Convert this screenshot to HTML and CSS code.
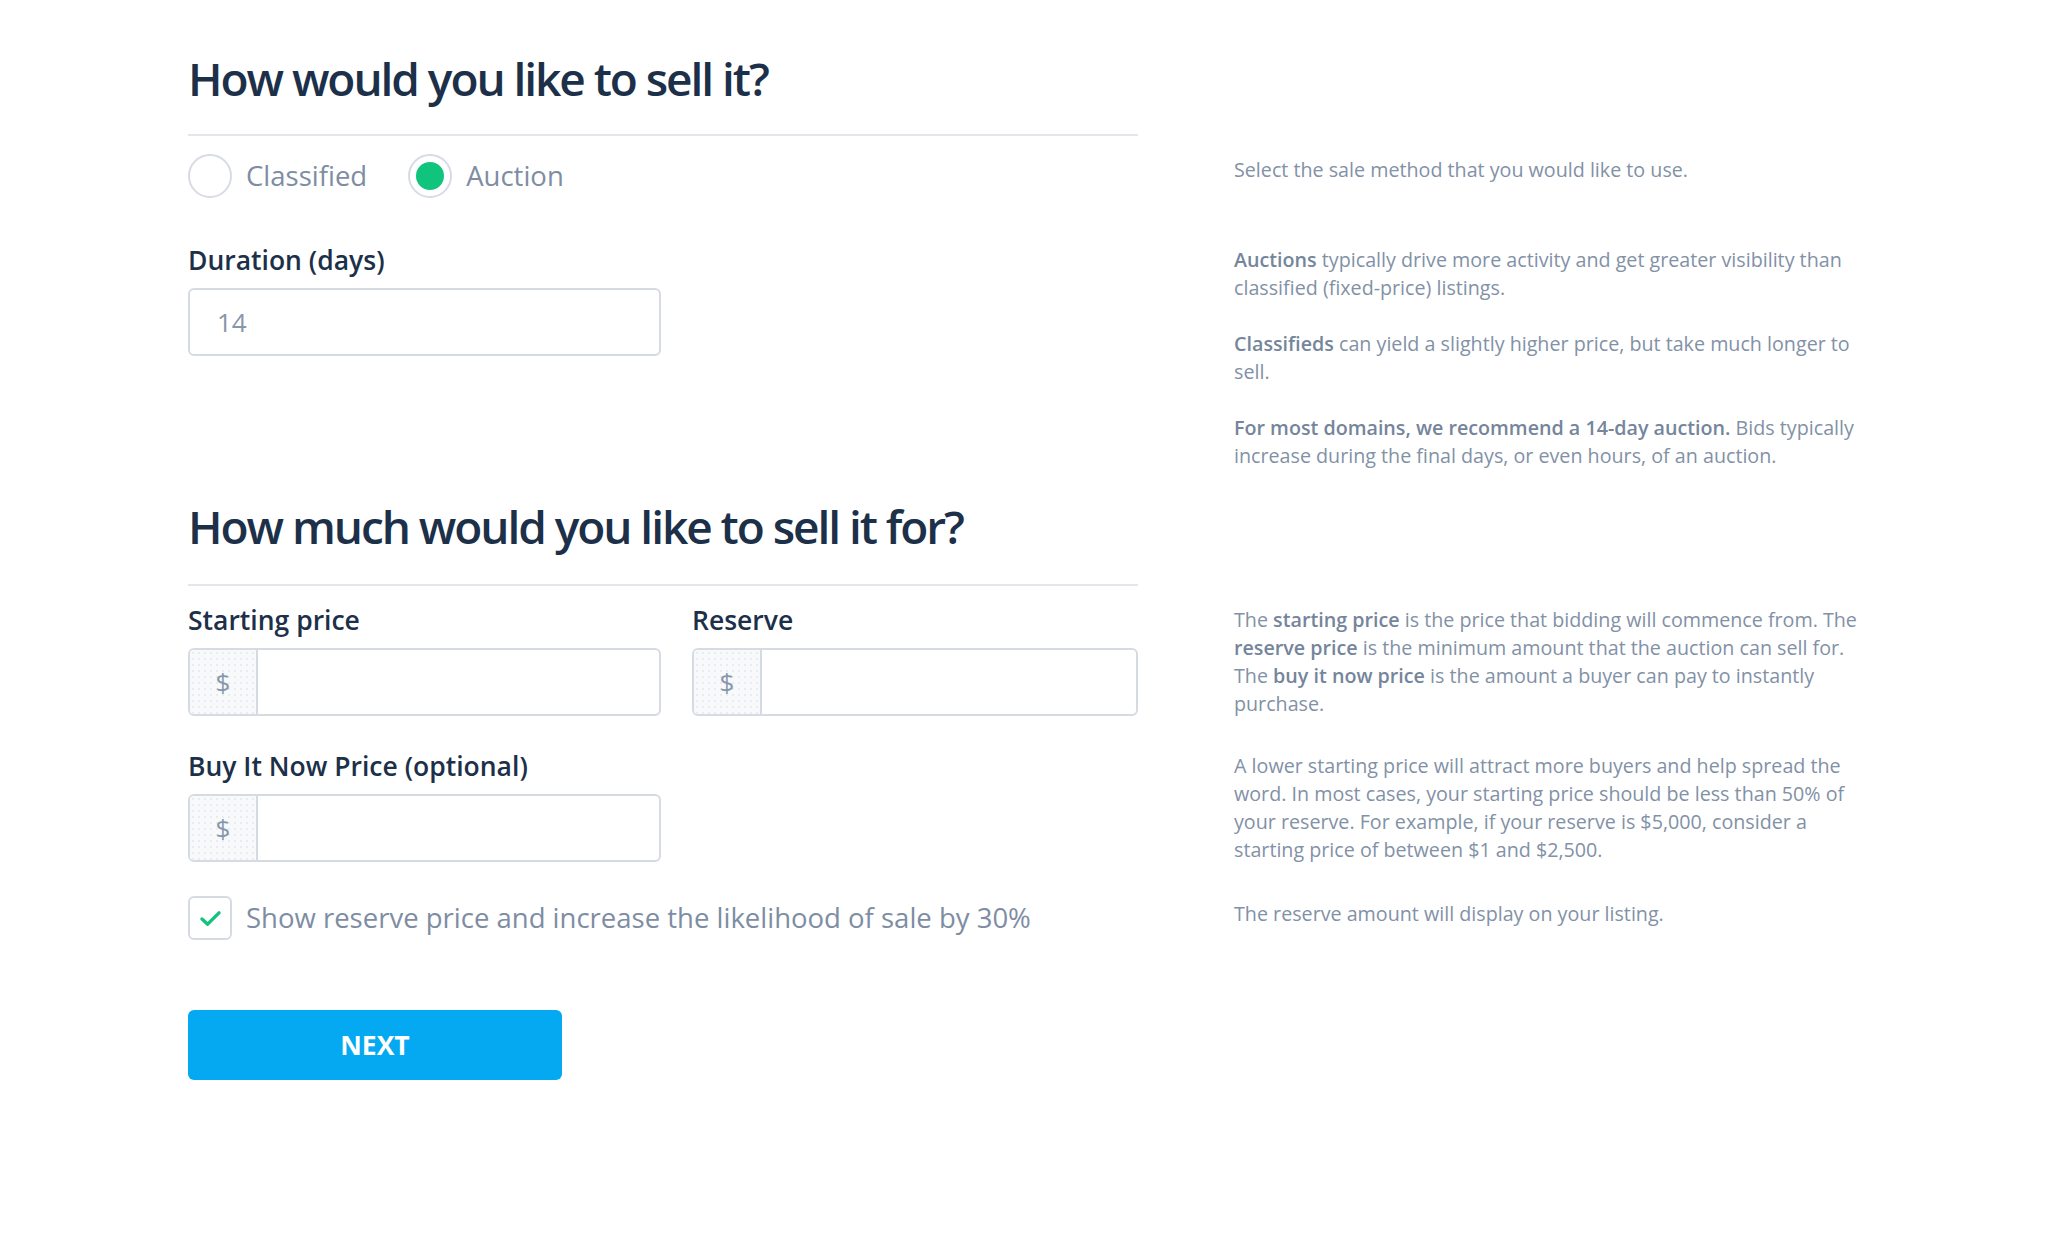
FILE: index.html
```html
<!DOCTYPE html>
<html lang="en">
<head>
<meta charset="utf-8">
<title>Sell your domain</title>
<link rel="stylesheet" href="styles.css">
</head>
<body>
<main class="page">
  <section class="section section-method">
    <h1 class="heading">How would you like to sell it?</h1>
    <div class="rule"></div>

    <div class="radios row-first">
      <label class="radio">
        <span class="radio-circle"></span>
        <span class="radio-text">Classified</span>
      </label>
      <label class="radio">
        <span class="radio-circle checked"><span class="radio-dot"></span></span>
        <span class="radio-text">Auction</span>
      </label>
    </div>
    <p class="hint hint-method">Select the sale method that you would like to use.</p>

    <div class="field row-second">
      <div class="label">Duration (days)</div>
      <div class="input input-narrow"><span class="input-value">14</span></div>
    </div>
    <div class="notes row-second">
      <p class="hint"><b>Auctions</b> typically drive more activity and get greater visibility than classified (fixed-price) listings.</p>
      <p class="hint"><b>Classifieds</b> can yield a slightly higher price, but take much longer to sell.</p>
      <p class="hint"><b>For most domains, we recommend a 14-day auction.</b> Bids typically increase during the final days, or even hours, of an auction.</p>
    </div>
  </section>

  <section class="section section-price">
    <h1 class="heading">How much would you like to sell it for?</h1>
    <div class="rule rule-price"></div>

    <div class="price-pair row-a">
      <div class="field">
        <div class="label">Starting price</div>
        <div class="input"><span class="prefix">$</span><span class="input-body"></span></div>
      </div>
      <div class="field">
        <div class="label">Reserve</div>
        <div class="input"><span class="prefix">$</span><span class="input-body"></span></div>
      </div>
    </div>
    <div class="notes row-a">
      <p class="hint">The <b>starting price</b> is the price that bidding will commence from. The <b>reserve price</b> is the minimum amount that the auction can sell for. The <b>buy it now price</b> is the amount a buyer can pay to instantly purchase.</p>
    </div>

    <div class="field row-b">
      <div class="label">Buy It Now Price (optional)</div>
      <div class="input input-narrow"><span class="prefix">$</span><span class="input-body"></span></div>
    </div>
    <div class="notes row-b">
      <p class="hint">A lower starting price will attract more buyers and help spread the word. In most cases, your starting price should be less than 50% of your reserve. For example, if your reserve is $5,000, consider a starting price of between $1 and $2,500.</p>
    </div>

    <label class="check row-c">
      <span class="check-box">
        <svg class="check-mark" viewBox="0 0 24 18" width="23" height="17" aria-hidden="true">
          <path d="M3 9.5 L9 15 L21 3" fill="none" stroke="#12c27e" stroke-width="3.6" stroke-linecap="round" stroke-linejoin="round"/>
        </svg>
      </span>
      <span class="check-text">Show reserve price and increase the likelihood of sale by 30%</span>
    </label>
    <p class="hint hint-reserve">The reserve amount will display on your listing.</p>

    <div class="actions">
      <button class="btn-next" type="button">NEXT</button>
    </div>
  </section>
</main>
</body>
</html>
```

FILE: styles.css
```css
* { box-sizing: border-box; }

body {
  margin: 0;
  background: #ffffff;
  font-family: "Open Sans", "Noto Sans", sans-serif;
  color: #1d3049;
}

.page {
  width: 1670px;
  margin: 0 auto;
  padding-top: 50px;
}

.section {
  display: grid;
  grid-template-columns: 950px 636px;
  column-gap: 96px;
  align-items: start;
}

.section-price { margin-top: 28px; }

.heading {
  grid-column: 1;
  margin: 0;
  font-size: 46px;
  line-height: 56px;
  font-weight: 600;
  letter-spacing: -2.05px;
  color: #1d3049;
}

.rule {
  grid-column: 1;
  height: 2px;
  margin-top: 28px;
  background: #e3e6ea;
}

.rule-price { margin-top: 30px; }

.hint {
  margin: 0;
  font-size: 19.7px;
  line-height: 28px;
  color: #8291a6;
}

.hint b {
  font-weight: 600;
  color: #75859b;
}

.notes {
  grid-column: 2;
  display: flex;
  flex-direction: column;
  gap: 28px;
}

.hint-method {
  grid-column: 2;
  margin-top: 20px;
}

.hint-reserve {
  grid-column: 2;
  margin-top: 36px;
}

/* radios */
.radios {
  grid-column: 1;
  display: flex;
  align-items: center;
  gap: 41px;
  height: 44px;
}

.row-first { margin-top: 18px; }

.radio {
  display: flex;
  align-items: center;
  gap: 14px;
}

.radio-circle {
  width: 44px;
  height: 44px;
  border: 2px solid #d7dce4;
  border-radius: 50%;
  display: flex;
  align-items: center;
  justify-content: center;
}

.radio-dot {
  width: 28px;
  height: 28px;
  border-radius: 50%;
  background: #10c47d;
}

.radio-text {
  font-size: 27.5px;
  line-height: 36px;
  color: #7e8da3;
}

.row-second { margin-top: 48px; }

/* fields */
.field { grid-column: 1; }

.label {
  font-size: 26.5px;
  line-height: 28px;
  font-weight: 600;
  color: #1d3049;
  margin-bottom: 14px;
}

.input {
  height: 68px;
  border: 2px solid #d6dbe3;
  border-radius: 6px;
  display: flex;
  align-items: stretch;
  overflow: hidden;
  background: #fff;
}

.input-narrow { width: 473px; }

.input-value {
  align-self: center;
  padding-left: 27px;
  font-size: 26px;
  color: #8796aa;
}

.prefix {
  width: 68px;
  flex: none;
  display: flex;
  align-items: center;
  justify-content: center;
  border-right: 2px solid #d6dbe3;
  background-color: #f7f9fb;
  background-image: radial-gradient(circle, #e4e8ee 0.6px, transparent 1px);
  background-size: 6px 6px;
  font-size: 26px;
  color: #8796aa;
}

.input-body { flex: 1; }

.price-pair {
  grid-column: 1;
  display: grid;
  grid-template-columns: 473px 1fr;
  column-gap: 31px;
}

.price-pair .field { grid-column: auto; }

.row-a { margin-top: 20px; }
.row-b { margin-top: 34px; }

/* checkbox */
.check {
  grid-column: 1;
  display: flex;
  align-items: center;
  gap: 14px;
  margin-top: 32px;
}

.check-box {
  width: 44px;
  height: 44px;
  flex: none;
  border: 2px solid #d6dbe3;
  border-radius: 6px;
  display: flex;
  align-items: center;
  justify-content: center;
}

.check-text {
  font-size: 27.5px;
  line-height: 36px;
  color: #7e8da3;
}

.actions {
  grid-column: 1;
  margin-top: 70px;
}

.btn-next {
  width: 374px;
  height: 70px;
  border: none;
  border-radius: 6px;
  background: #05a9f2;
  color: #ffffff;
  font-family: "Open Sans", "Noto Sans", sans-serif;
  font-size: 26.5px;
  font-weight: 700;
  cursor: pointer;
}
```
